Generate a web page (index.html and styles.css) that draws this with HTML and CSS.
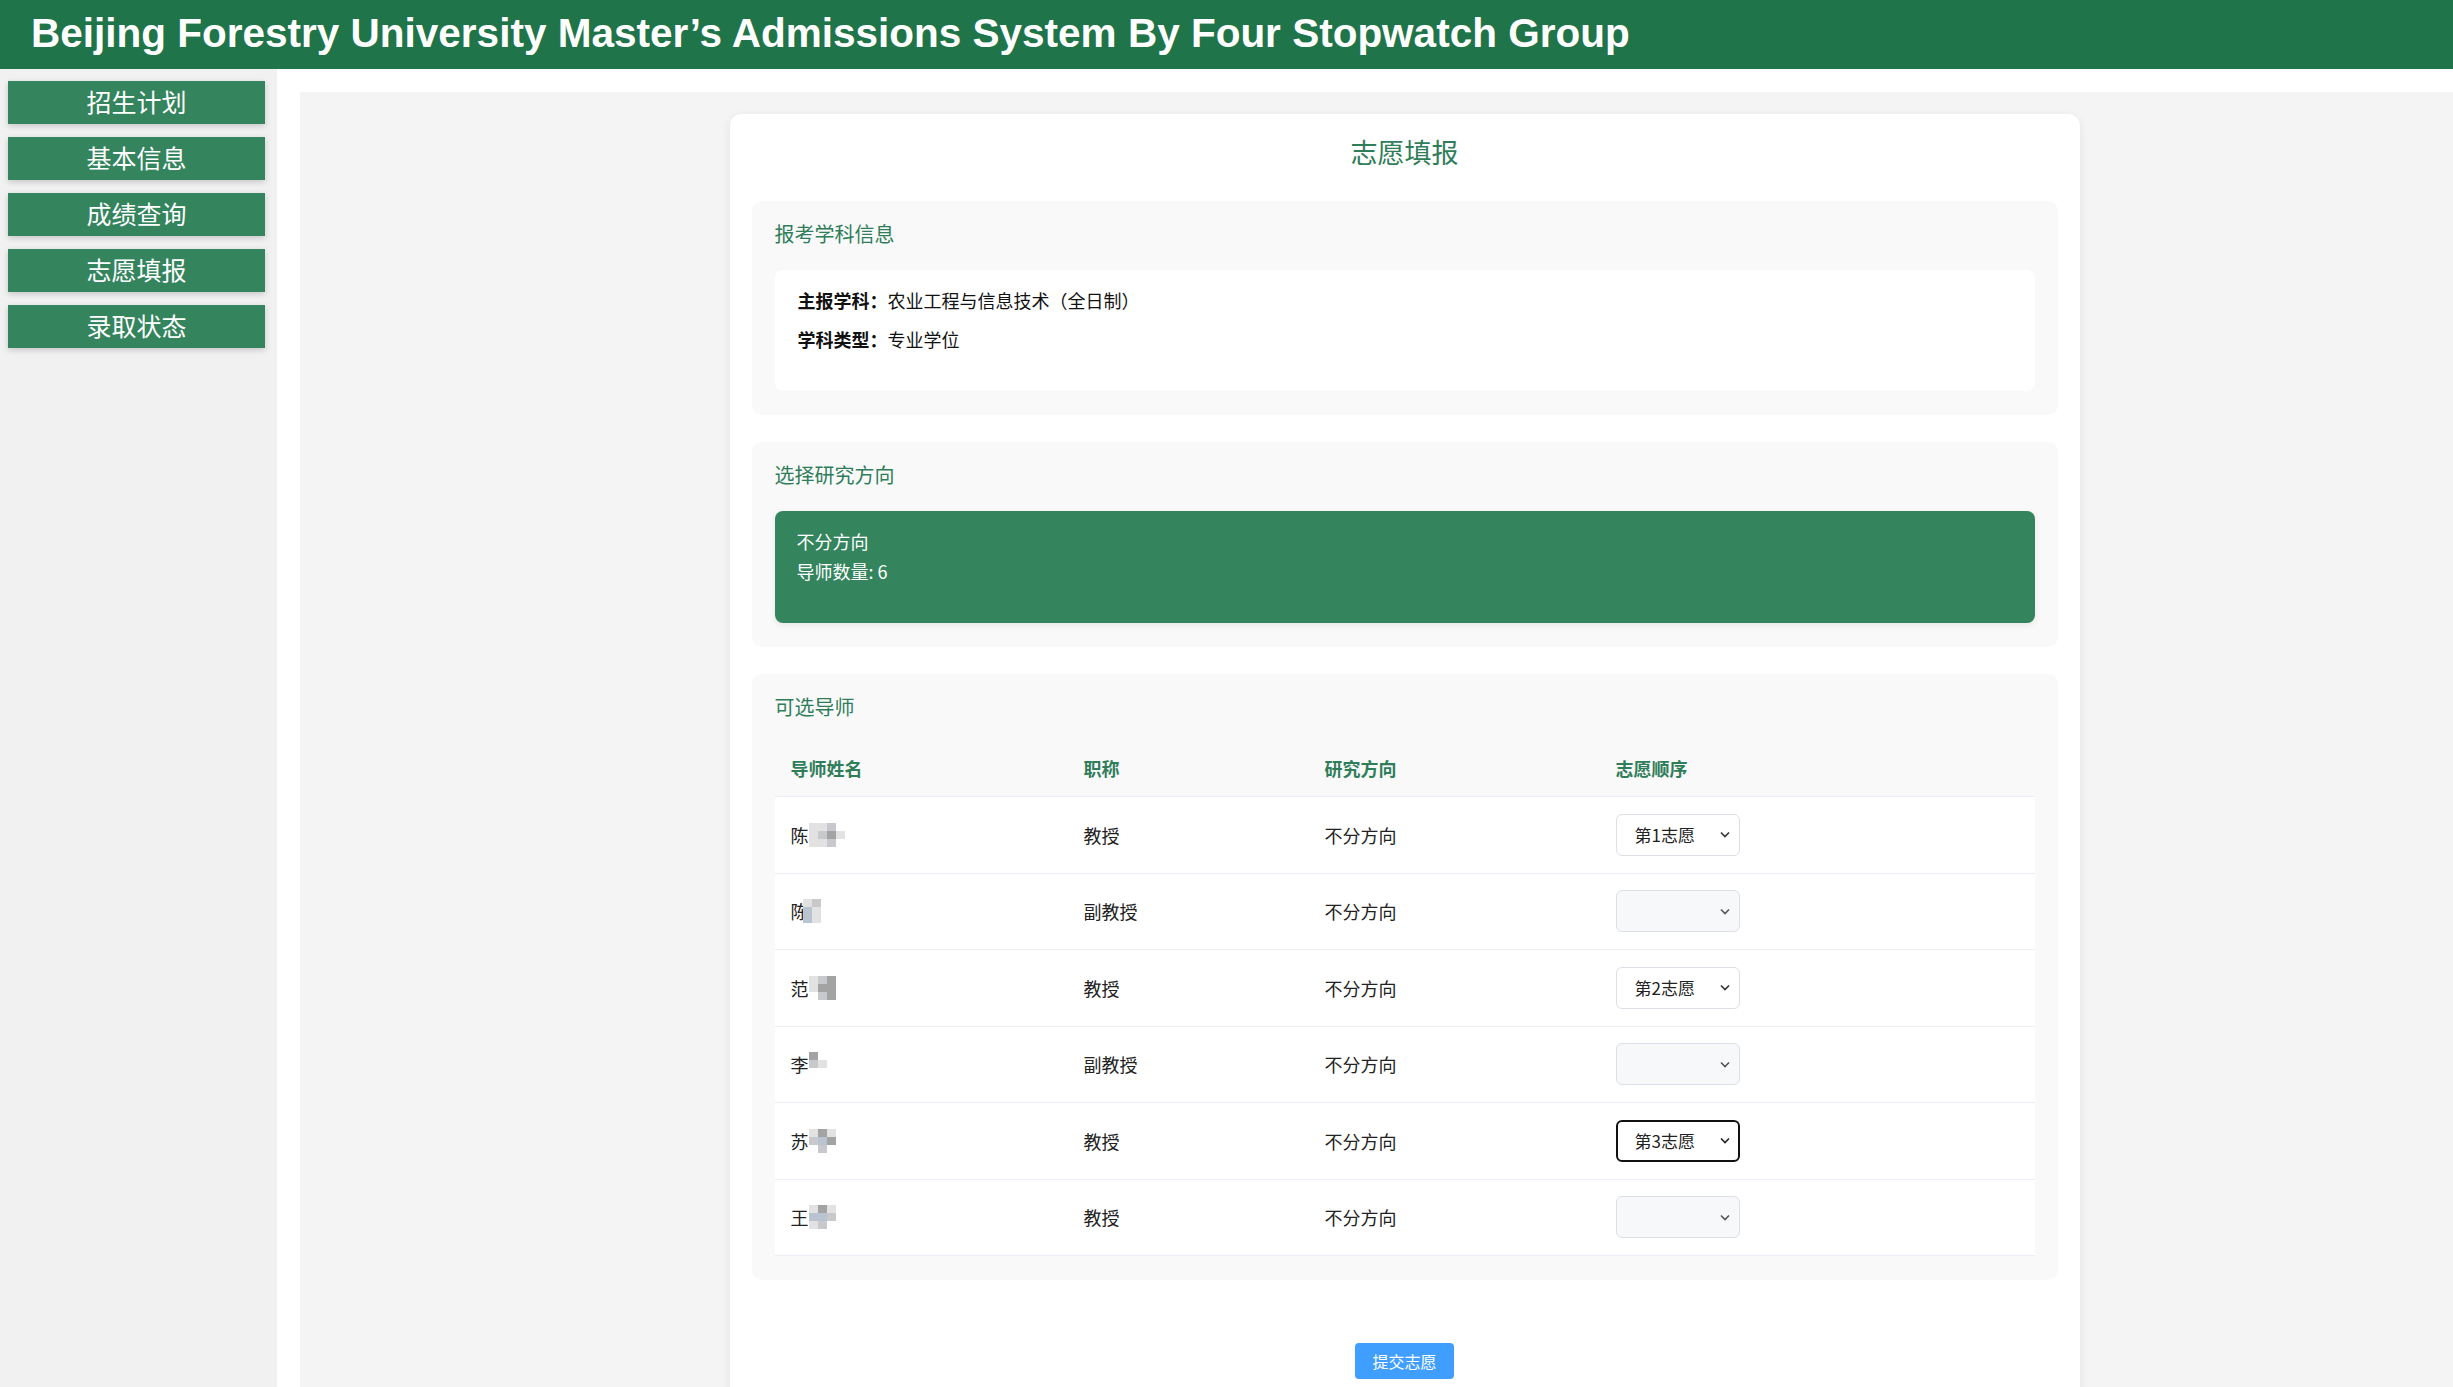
FILE: index.html
```html
<!DOCTYPE html>
<html lang="zh-CN">
<head>
<meta charset="utf-8">
<title>志愿填报</title>
<link rel="stylesheet" href="styles.css">
</head>
<body>
<header class="topbar">
  <h1 class="brand">Beijing Forestry University Master’s Admissions System By Four Stopwatch Group</h1>
</header>
<div class="layout">
  <aside class="sidebar">
    <nav class="nav">
      <a class="nav-btn">招生计划</a>
      <a class="nav-btn">基本信息</a>
      <a class="nav-btn">成绩查询</a>
      <a class="nav-btn">志愿填报</a>
      <a class="nav-btn">录取状态</a>
    </nav>
  </aside>
  <main class="main">
    <div class="content">
      <div class="card">
        <h2 class="card-title">志愿填报</h2>

        <section class="panel">
          <h3 class="panel-title">报考学科信息</h3>
          <div class="info-box">
            <p class="info-line"><strong>主报学科：</strong>农业工程与信息技术（全日制）</p>
            <p class="info-line"><strong>学科类型：</strong>专业学位</p>
          </div>
        </section>

        <section class="panel">
          <h3 class="panel-title">选择研究方向</h3>
          <div class="direction-box">
            <div class="direction-name">不分方向</div>
            <div class="direction-count">导师数量: 6</div>
          </div>
        </section>

        <section class="panel panel-last">
          <h3 class="panel-title">可选导师</h3>
          <div class="table">
            <div class="row head">
              <div class="cell">导师姓名</div>
              <div class="cell">职称</div>
              <div class="cell">研究方向</div>
              <div class="cell">志愿顺序</div>
            </div>
            <div class="row">
              <div class="cell name">陈<span class="mosaic"><i class="s1"></i><i class="s1"></i><i class="s2"></i><i class="s0"></i><i class="s1"></i><i class="s2"></i><i class="s3"></i><i class="s1"></i><i class="s1"></i><i class="s1"></i><i class="s2"></i><i class="s0"></i></span></div>
              <div class="cell">教授</div>
              <div class="cell">不分方向</div>
              <div class="cell"><div class="select filled"><span>第1志愿</span><svg class="chev" width="10" height="7" viewBox="0 0 10 7"><path d="M1 1.5 L5 5.5 L9 1.5" fill="none" stroke="#333" stroke-width="1.6"/></svg></div></div>
            </div>
            <div class="row">
              <div class="cell name">陈<span class="mosaic tight"><i class="s1"></i><i class="s2"></i><i class="s0"></i><i class="s0"></i><i class="s4"></i><i class="s1"></i><i class="s0"></i><i class="s0"></i><i class="s4"></i><i class="s1"></i><i class="s0"></i><i class="s0"></i></span></div>
              <div class="cell">副教授</div>
              <div class="cell">不分方向</div>
              <div class="cell"><div class="select empty"><span></span><svg class="chev" width="10" height="7" viewBox="0 0 10 7"><path d="M1 1.5 L5 5.5 L9 1.5" fill="none" stroke="#555" stroke-width="1.6"/></svg></div></div>
            </div>
            <div class="row">
              <div class="cell name">范<span class="mosaic"><i class="s1"></i><i class="s2"></i><i class="s3"></i><i class="s0"></i><i class="s1"></i><i class="s3"></i><i class="s3"></i><i class="s0"></i><i class="s0"></i><i class="s2"></i><i class="s3"></i><i class="s0"></i></span></div>
              <div class="cell">教授</div>
              <div class="cell">不分方向</div>
              <div class="cell"><div class="select filled"><span>第2志愿</span><svg class="chev" width="10" height="7" viewBox="0 0 10 7"><path d="M1 1.5 L5 5.5 L9 1.5" fill="none" stroke="#333" stroke-width="1.6"/></svg></div></div>
            </div>
            <div class="row">
              <div class="cell name">李<span class="mosaic"><i class="s3"></i><i class="s0"></i><i class="s0"></i><i class="s0"></i><i class="s2"></i><i class="s1"></i><i class="s0"></i><i class="s0"></i><i class="s0"></i><i class="s0"></i><i class="s0"></i><i class="s0"></i></span></div>
              <div class="cell">副教授</div>
              <div class="cell">不分方向</div>
              <div class="cell"><div class="select empty"><span></span><svg class="chev" width="10" height="7" viewBox="0 0 10 7"><path d="M1 1.5 L5 5.5 L9 1.5" fill="none" stroke="#555" stroke-width="1.6"/></svg></div></div>
            </div>
            <div class="row">
              <div class="cell name">苏<span class="mosaic"><i class="s1"></i><i class="s3"></i><i class="s1"></i><i class="s0"></i><i class="s2"></i><i class="s4"></i><i class="s3"></i><i class="s0"></i><i class="s0"></i><i class="s2"></i><i class="s0"></i><i class="s0"></i></span></div>
              <div class="cell">教授</div>
              <div class="cell">不分方向</div>
              <div class="cell"><div class="select filled focused"><span>第3志愿</span><svg class="chev" width="10" height="7" viewBox="0 0 10 7"><path d="M1 1.5 L5 5.5 L9 1.5" fill="none" stroke="#222" stroke-width="1.6"/></svg></div></div>
            </div>
            <div class="row">
              <div class="cell name">王<span class="mosaic"><i class="s1"></i><i class="s3"></i><i class="s1"></i><i class="s0"></i><i class="s4"></i><i class="s4"></i><i class="s2"></i><i class="s0"></i><i class="s1"></i><i class="s2"></i><i class="s0"></i><i class="s0"></i></span></div>
              <div class="cell">教授</div>
              <div class="cell">不分方向</div>
              <div class="cell"><div class="select empty"><span></span><svg class="chev" width="10" height="7" viewBox="0 0 10 7"><path d="M1 1.5 L5 5.5 L9 1.5" fill="none" stroke="#555" stroke-width="1.6"/></svg></div></div>
            </div>
          </div>
        </section>

        <div class="actions">
          <button class="submit">提交志愿</button>
        </div>
      </div>
    </div>
  </main>
</div>
</body>
</html>
```
FILE: styles.css
```css
* { box-sizing: border-box; }
html, body { margin: 0; padding: 0; height: 100%; }
body {
  font-family: "Noto Sans CJK SC", "Liberation Sans", sans-serif;
  color: #222;
  background: #ffffff;
  overflow: hidden;
}

.topbar {
  height: 69px;
  background: #1f7449;
  padding-left: 31px;
}
.brand {
  margin: 0;
  font-family: "Liberation Sans", Arial, sans-serif;
  font-weight: bold;
  font-size: 40.5px;
  line-height: 66px;
  color: #ffffff;
  white-space: nowrap;
}

.layout {
  display: flex;
  height: calc(100vh - 69px);
}

.sidebar {
  width: 277px;
  flex-shrink: 0;
  background: #f1f1f1;
  padding: 12px 12px 0 8px;
}
.nav {
  display: flex;
  flex-direction: column;
  gap: 13px;
}
.nav-btn {
  display: block;
  height: 43px;
  background: #34845e;
  color: #ffffff;
  font-size: 25px;
  line-height: 41px;
  text-align: center;
  box-shadow: 0 2px 6px rgba(0, 0, 0, 0.18);
}

.main {
  flex: 1;
  background: #ffffff;
  padding: 23px 0 0 23px;
  min-width: 0;
}
.content {
  height: 100%;
  background: #f4f4f4;
  padding: 22px 0 0 56px;
  display: flex;
  justify-content: center;
  overflow: hidden;
}

.card {
  width: 1350px;
  flex-shrink: 0;
  background: #ffffff;
  border-radius: 12px;
  box-shadow: 0 2px 10px rgba(0, 0, 0, 0.07);
  padding: 20px 22px 40px;
  align-self: flex-start;
}
.card-title {
  margin: 0 0 31px;
  text-align: center;
  font-size: 27px;
  line-height: 36px;
  font-weight: normal;
  color: #2f7d59;
}

.panel {
  background: #f9f9f9;
  border-radius: 10px;
  padding: 19px 23px 24px;
  margin-bottom: 27px;
}
.panel-last { margin-bottom: 63px; }
.panel-title {
  margin: 0 0 22px;
  font-size: 20px;
  line-height: 28px;
  font-weight: normal;
  color: #2f7d59;
}

.info-box {
  background: #ffffff;
  border-radius: 8px;
  padding: 17px 23px 39px;
}
.info-line {
  margin: 0 0 13px;
  font-size: 18px;
  line-height: 26px;
  color: #111;
}
.info-line:last-child { margin-bottom: 0; }
.info-line strong { font-weight: bold; }

.direction-box {
  background: #34845e;
  border-radius: 8px;
  padding: 15px 22px 37px;
  color: #ffffff;
  font-size: 18px;
  line-height: 30px;
  box-shadow: 0 2px 6px rgba(0, 0, 0, 0.08);
}

.table {
  font-size: 18px;
}
.row {
  display: grid;
  grid-template-columns: 293px 241px 291px 1fr;
  align-items: center;
  height: 76.5px;
  background: #ffffff;
  border-bottom: 1px solid #ebeef5;
}
.row.head {
  height: 54px;
  background: transparent;
  font-weight: bold;
  color: #2f7d59;
}
.row.head .cell { padding-bottom: 3px; }
.cell {
  padding-left: 16px;
  line-height: 26px;
}
.name {
  display: flex;
  align-items: center;
}

.mosaic {
  display: inline-grid;
  grid-template-columns: repeat(4, 9px);
  grid-template-rows: repeat(3, 8px);
}
.mosaic.tight { margin-left: -6px; }
.mosaic i { display: block; }
.s0 { background: transparent; }
.s1 { background: #e2e2e2; }
.s2 { background: #c7c9cc; }
.s3 { background: #a3a3a3; }
.s4 { background: #b9c4d0; }

.select {
  width: 124px;
  height: 42px;
  border: 1px solid #dcdfe6;
  border-radius: 6px;
  display: flex;
  align-items: center;
  justify-content: space-between;
  padding: 0 9px 0 18px;
  font-size: 17px;
  color: #222;
}
.select.filled { background: #ffffff; }
.select.empty { background: #f7f8fa; }
.select.focused {
  border: 2px solid #111;
  padding: 0 8px 0 17px;
}
.chev { display: block; }

.actions {
  display: flex;
  justify-content: center;
}
.submit {
  width: 99px;
  height: 36px;
  border: none;
  border-radius: 4px;
  background: #409eff;
  color: #ffffff;
  font-family: "Noto Sans CJK SC", sans-serif;
  font-size: 16px;
  padding: 0;
}
```
